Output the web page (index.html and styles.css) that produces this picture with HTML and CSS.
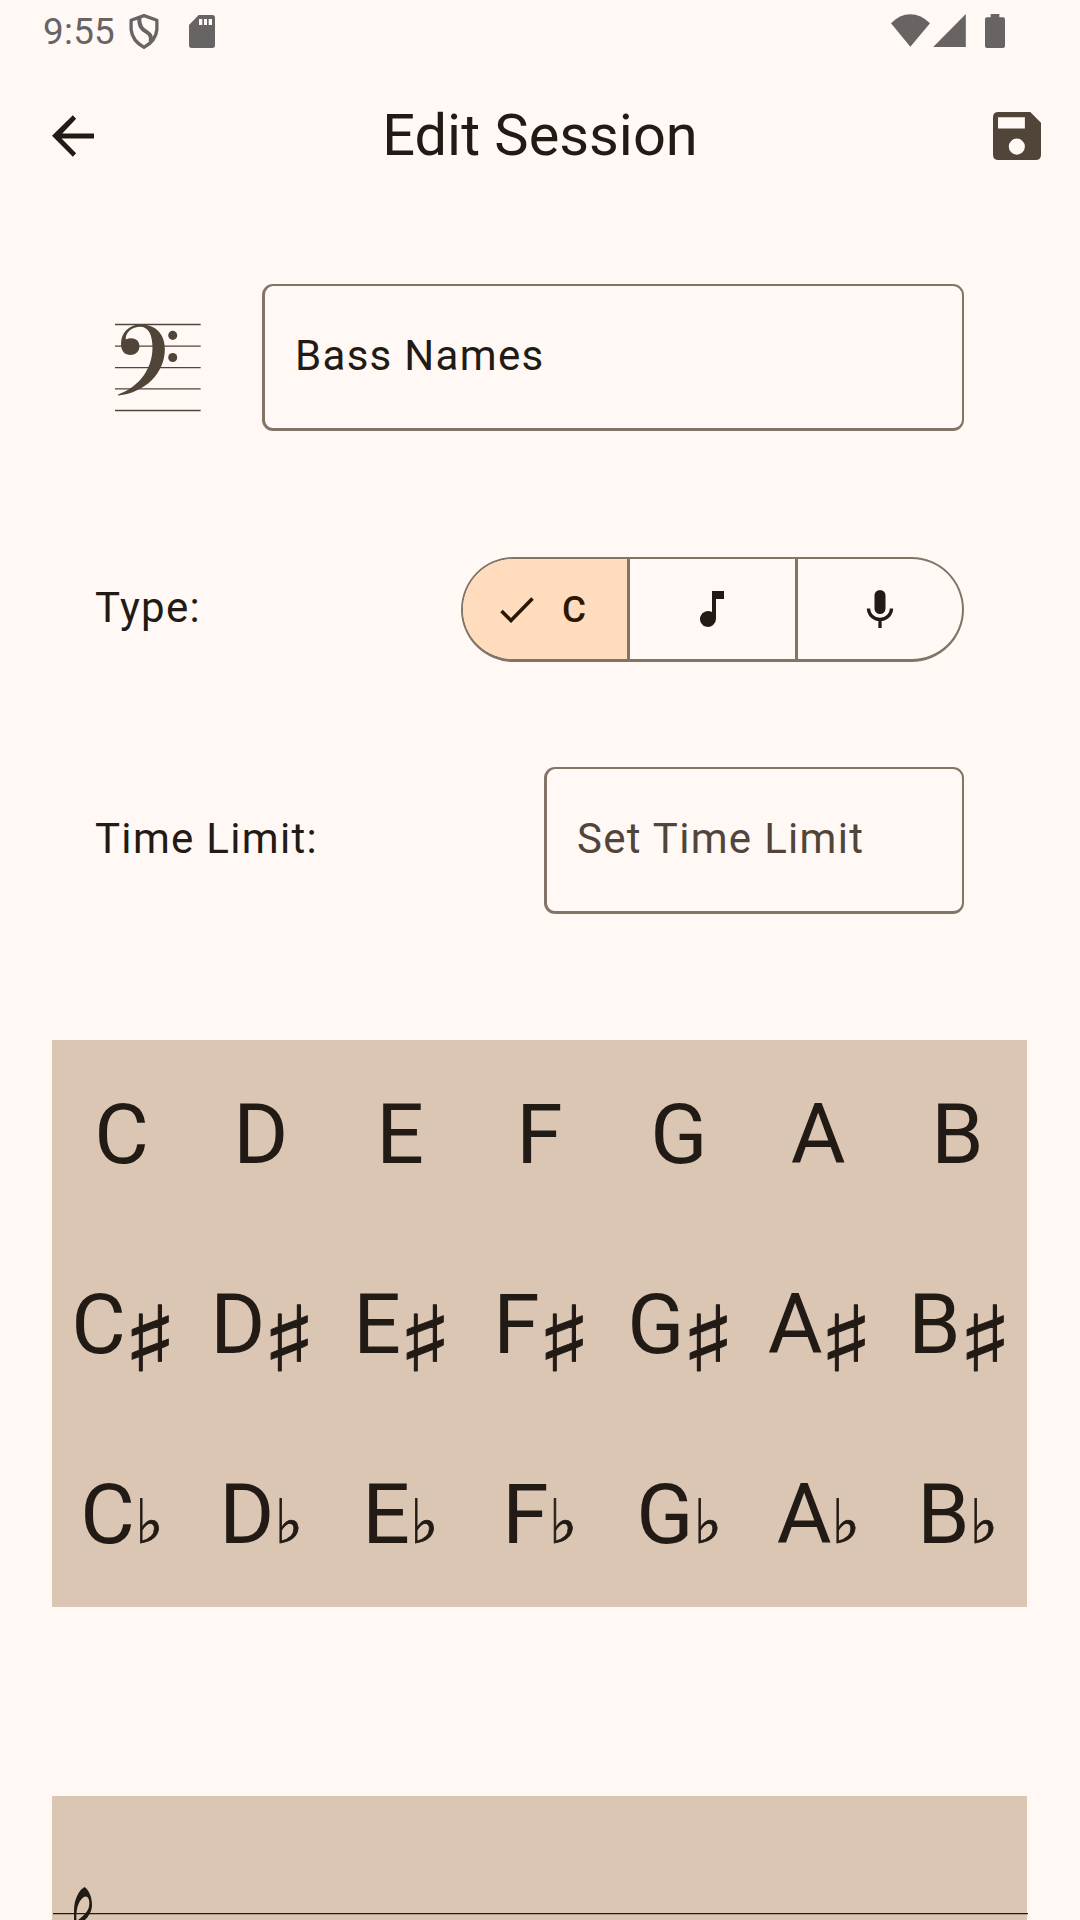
FILE: index.html
```html
<!DOCTYPE html>
<html lang="en">
<head>
<meta charset="utf-8">
<title>Edit Session</title>
<link rel="stylesheet" href="styles.css">
</head>
<body>
<header class="status">
  <span class="clock">9:55</span>
  <svg class="shield" viewBox="388 41 90 106"><path d="M433 46L472 60V88Q469 122 433 142Q397 122 394 88V60Z" fill="none" stroke="currentColor" stroke-width="10" stroke-linejoin="round"/><path d="M419 51C414 104 462 86 453 124" fill="none" stroke="currentColor" stroke-width="12"/></svg>
  <svg class="sd" viewBox="567 45 78 99"><path fill-rule="evenodd" d="M596 45H637Q645 45 645 53V136Q645 144 637 144H575Q567 144 567 136V75ZM597 57V75H607V57ZM612 57V75H621V57ZM626 57V75H636V57Z" fill="currentColor"/></svg>
  <svg class="wifi" viewBox="93 42 117 98"><path d="M93 69Q119 42 151 42T210 69L151 140Z" fill="currentColor"/></svg>
  <svg class="signal" viewBox="220 42 98 99"><path d="M318 42V141H220Z" fill="currentColor"/></svg>
  <svg class="battery" viewBox="375 42 60 102"><path d="M392 42H418V52H429Q435 52 435 58V138Q435 144 429 144H381Q375 144 375 138V58Q375 52 381 52H392Z" fill="currentColor"/></svg>
</header>
<nav class="appbar">
  <svg class="back" viewBox="158 347 127 125"><path d="M285 402H189L231 357L221 347L158 409L221 472L231 462L187 417H285Z" fill="currentColor"/></svg>
  <h1 class="title">Edit Session</h1>
  <svg class="save" viewBox="400 338 143 143"><path fill-rule="evenodd" d="M416 338H511L543 370V465Q543 481 527 481H416Q400 481 400 465V354Q400 338 416 338ZM415 354V387H495V354ZM471 417A24 24 0 1 0 471 465A24 24 0 1 0 471 417Z" fill="currentColor"/></svg>
</nav>
<main class="content">
  <section class="name-row">
    <svg class="clef" viewBox="105 160 257 265"><path d="M105 164H361M105 228.500H361M105 293H361M105 356.500H361M105 421H361" fill="none" stroke="currentColor" stroke-width="4"/><path d="M113 374C168 355 217 305 217 233C217 195 205 171 180 171C157 171 136 187 137 209C158 200 178 208 178 229C178 245 167 255 152 255C134 255 123 243 123 222C123 188 147 164 181 164C228 164 254 193 254 237C254 309 196 367 115 376Z" fill="currentColor"/><circle cx="277.500" cy="196.500" r="13.500" fill="currentColor"/><circle cx="277.500" cy="262.500" r="13.500" fill="currentColor"/></svg>
    <div class="field field-name">Bass Names</div>
  </section>
  <section class="row type-row">
    <span class="label">Type:</span>
    <div class="segments">
      <div class="segment selected"><svg class="check" viewBox="0 0 34 26"><path d="M1.500 14L11 23.500L32.500 1.500" fill="none" stroke="currentColor" stroke-width="3.600"/></svg><span>C</span></div>
      <div class="segment"><svg class="note" viewBox="0 0 24 36"><path d="M12 0H24V8H16V28A8 8 0 1 1 12 21Z" fill="currentColor"/></svg></div>
      <div class="segment"><svg class="mic" viewBox="0 0 28 38"><rect x="8.500" y="0" width="11" height="24" rx="5.500" fill="currentColor"/><path d="M2.500 18.500A11.500 11 0 0 0 25.500 18.500M14 29V38" fill="none" stroke="currentColor" stroke-width="3.300"/></svg></div>
    </div>
  </section>
  <section class="row limit-row">
    <span class="label">Time Limit:</span>
    <div class="field field-limit">Set Time Limit</div>
  </section>
  <section class="notes">
    <span>C</span><span>D</span><span>E</span><span>F</span><span>G</span><span>A</span><span>B</span>
    <span>C<i class="sharp">♯</i></span><span>D<i class="sharp">♯</i></span><span>E<i class="sharp">♯</i></span><span>F<i class="sharp">♯</i></span><span>G<i class="sharp">♯</i></span><span>A<i class="sharp">♯</i></span><span>B<i class="sharp">♯</i></span>
    <span>C<i class="flat">♭</i></span><span>D<i class="flat">♭</i></span><span>E<i class="flat">♭</i></span><span>F<i class="flat">♭</i></span><span>G<i class="flat">♭</i></span><span>A<i class="flat">♭</i></span><span>B<i class="flat">♭</i></span>
  </section>
  <section class="staff">
    <svg class="treble" viewBox="0 0 976 124"><path d="M1 117.650H976" stroke="currentColor" stroke-width="1.300"/><path d="M22 124V115C22 103 27 94 32.500 91C37 94 40 101 40 109C40 116 36 121 33 124H26C33 119 39 113 37 104C35 98 31 101 28 105C25 110 24 117 24.500 124Z" fill="currentColor"/></svg>
  </section>
</main>
</body>
</html>
```
FILE: styles.css
```css
* { box-sizing: border-box; }
body {
  margin: 0;
  width: 1080px;
  height: 1920px;
  overflow: hidden;
  background: #fff8f5;
  color: #221a15;
  font-family: Roboto, "Liberation Sans", sans-serif;
}
svg { display: block; flex: none; }
.status {
  height: 63px;
  display: flex;
  align-items: flex-start;
  padding: 14px 75px 0 43px;
  color: #686463;
}
.clock { width: 86px; font-size: 36.750px; line-height: 36px; letter-spacing: 0.300px; }
.shield { width: 30px; height: 35px; }
.sd { width: 26px; height: 33px; margin: 1px auto 0 30px; }
.wifi { width: 39px; height: 33px; }
.signal { width: 33px; height: 33px; margin: 0 19px 0 3px; }
.battery { width: 20px; height: 34px; }
.appbar {
  height: 145px;
  display: flex;
  justify-content: space-between;
  align-items: center;
  padding: 0 39px 0 52px;
}
.back { width: 42px; height: 42px; }
.title { margin: 0 7px 0 0; font-size: 57.750px; font-weight: 400; line-height: 72px; padding-bottom: 2px; }
.save { width: 48px; height: 48px; color: #51453a; }
.content { padding: 76px 53px 0 52px; }
.name-row {
  height: 147px;
  display: flex;
  align-items: center;
  justify-content: space-between;
  padding: 0 63px 0 63px;
}
.clef { width: 86px; height: 89px; margin-top: 19px; color: #51453a; }
.field {
  height: 147px;
  border: solid #837468;
  border-width: 2px 2px 3px 3px;
  border-radius: 11px;
  padding-left: 30px;
  font-size: 42px;
  line-height: 140px;
  letter-spacing: 1.310px;
}
.field-name { width: 702px; }
.field-limit { width: 420px; color: #51453a; }
.row {
  display: flex;
  align-items: center;
  justify-content: space-between;
  padding: 0 63px 0 43px;
}
.label { font-size: 42px; letter-spacing: 1.310px; line-height: 50px; margin-top: -4px; }
.type-row { margin-top: 126px; }
.segments {
  width: 503px;
  height: 105px;
  display: grid;
  grid-template-columns: 164px 168px 1fr;
  border: solid #837468;
  border-width: 2px 2px 3px 2px;
  border-radius: 53px;
  overflow: hidden;
}
.segment { display: flex; align-items: center; justify-content: center; }
.segment + .segment { border-left: 3px solid #837468; }
.selected {
  background: #ffdcbe;
  color: #2b1704;
  font-size: 36.750px;
  font-weight: 500;
  gap: 28px;
  padding-right: 4px;
}
.check { width: 34px; height: 26px; margin-top: 2px; }
.note { width: 24px; height: 36px; margin-right: 1px; }
.mic { width: 28px; height: 38px; }
.limit-row { margin-top: 105px; }
.notes {
  margin-top: 126px;
  height: 567px;
  display: grid;
  grid-template-columns: repeat(7, 1fr);
  grid-template-rows: 190px 190px 187px;
  background: #dbc6b3;
  font-size: 84px;
  line-height: 190px;
  text-align: center;
}
.notes span { white-space: nowrap; }
.sharp, .flat { display: inline-block; font-style: normal; font-family: "DejaVu Sans", sans-serif; line-height: 1; }
.sharp { width: 46px; transform: translate(1px, 16px) scale(1.360, 1.080); -webkit-text-stroke: 0.800px; }
.flat { width: 28px; font-size: 61px; -webkit-text-stroke: 0.800px; }
.staff { height: 124px; margin-top: 189px; background: #dbc6b3; }
.treble { width: 976px; height: 124px; }
```
